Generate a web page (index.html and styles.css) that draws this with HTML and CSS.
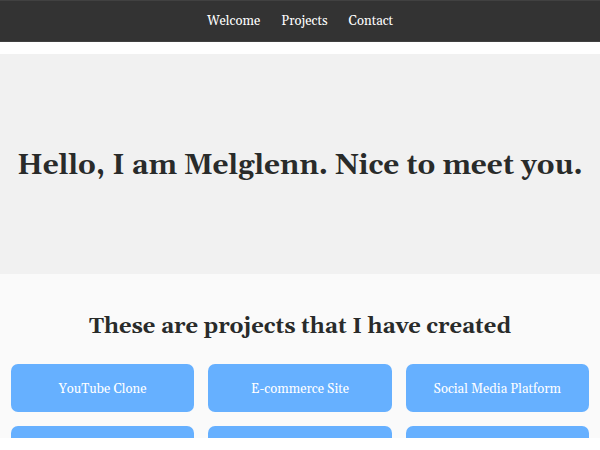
FILE: index.html
```html
<!DOCTYPE html>
<html lang="en">
<head>
<meta charset="utf-8">
<meta name="viewport" content="width=device-width, initial-scale=1">
<title>Melglenn</title>
<link rel="stylesheet" href="styles.css">
</head>
<body>
<div class="page">
  <nav class="navbar">
    <a href="#welcome">Welcome</a>
    <a href="#projects">Projects</a>
    <a href="#contact">Contact</a>
  </nav>
  <main>
    <section class="welcome" id="welcome">
      <h1>Hello, I am Melglenn. Nice to meet you.</h1>
    </section>
    <section class="projects" id="projects">
      <h2>These are projects that I have created</h2>
      <div class="grid">
        <a class="card" href="#projects">YouTube Clone</a>
        <a class="card" href="#projects">E-commerce Site</a>
        <a class="card" href="#projects">Social Media Platform</a>
        <div class="card"></div>
        <div class="card"></div>
        <div class="card"></div>
      </div>
    </section>
  </main>
</div>
</body>
</html>
```
FILE: styles.css
```css
* {
  box-sizing: border-box;
}

body {
  margin: 0;
  background: #fff;
  color: #292b2a;
  font-family: Georgia, Gelasio, "Liberation Serif", serif;
}

/* The page scrolls inside this frame, which leaves a strip below it. */
.page {
  height: calc(100vh - 12px);
  overflow: hidden;
}

.navbar {
  display: flex;
  justify-content: center;
  gap: 21px;
  padding: 10px 0;
  background: #333;
  border-top: 1px solid #414141;
  border-bottom: 1px solid #414141;
  font-size: 13px;
  line-height: 20px;
}

.navbar a {
  color: #fff;
  text-decoration: none;
}

.welcome {
  margin-top: 12px;
  padding: 94px 12px 90px;
  background: #f1f1f1;
  text-align: center;
}

h1 {
  margin: 0;
  font-size: 28px;
  line-height: 36px;
}

.projects {
  padding: 38px 11px;
  background: #fafafa;
  text-align: center;
}

h2 {
  margin: 0 0 22px;
  font-size: 22px;
  line-height: 30px;
}

.grid {
  display: grid;
  grid-template-columns: repeat(3, 1fr);
  gap: 14px;
}

.card {
  display: flex;
  align-items: center;
  justify-content: center;
  min-height: 48px;
  padding-top: 2px;
  border-radius: 7px;
  background: #66b0ff;
  color: #fff;
  font-size: 13px;
  line-height: 20px;
  text-decoration: none;
}
```
